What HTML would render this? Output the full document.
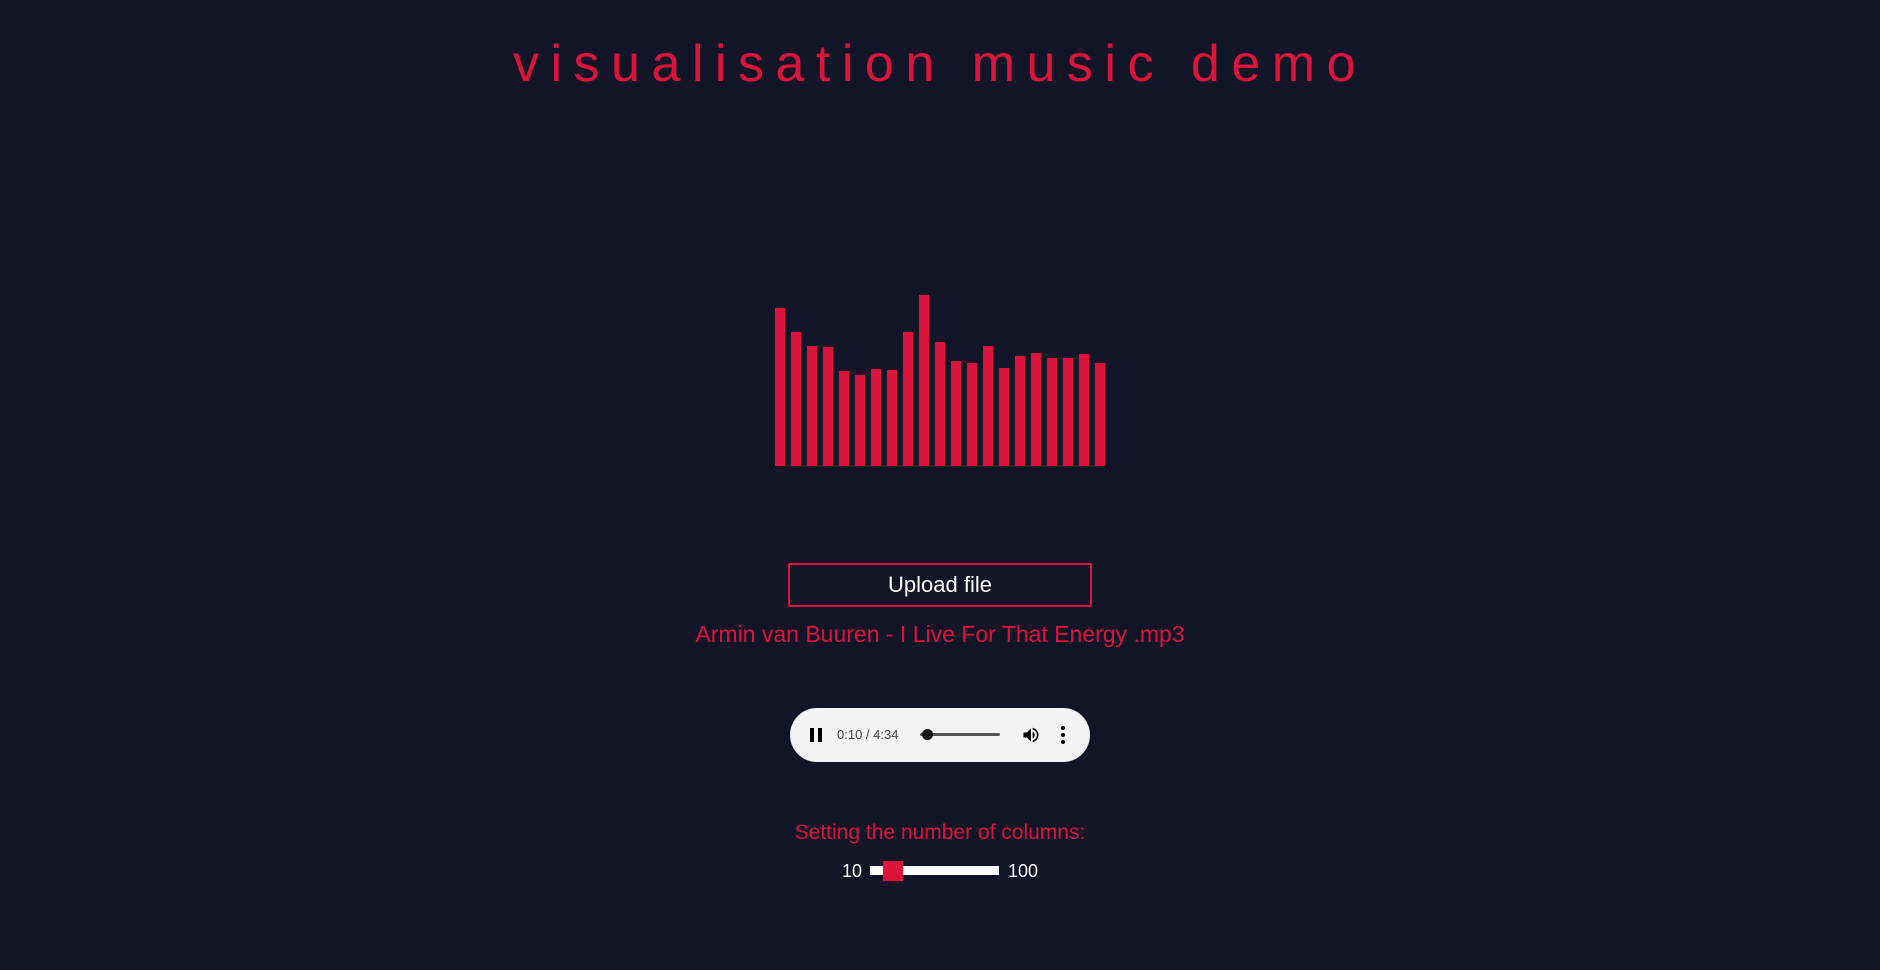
<!DOCTYPE html>
<html><head><meta charset="utf-8"><style>
html,body{margin:0;padding:0;width:1880px;height:970px;background:#121528;overflow:hidden;font-family:"Liberation Sans",sans-serif}
.a{position:absolute}
.bar{position:absolute;width:10px;background:#dc143c}
</style></head><body>
<div class="a" style="left:0;width:1880px;top:34px;text-align:center;color:#dc143c;font-size:52px;letter-spacing:11.5px;line-height:60px">visualisation music demo</div>
<div class="bar" style="left:775px;top:308px;height:158px"></div>
<div class="bar" style="left:791px;top:332px;height:134px"></div>
<div class="bar" style="left:807px;top:346px;height:120px"></div>
<div class="bar" style="left:823px;top:347px;height:119px"></div>
<div class="bar" style="left:839px;top:371px;height:95px"></div>
<div class="bar" style="left:855px;top:375px;height:91px"></div>
<div class="bar" style="left:871px;top:369px;height:97px"></div>
<div class="bar" style="left:887px;top:370px;height:96px"></div>
<div class="bar" style="left:903px;top:332px;height:134px"></div>
<div class="bar" style="left:919px;top:295px;height:171px"></div>
<div class="bar" style="left:935px;top:342px;height:124px"></div>
<div class="bar" style="left:951px;top:361px;height:105px"></div>
<div class="bar" style="left:967px;top:363px;height:103px"></div>
<div class="bar" style="left:983px;top:346px;height:120px"></div>
<div class="bar" style="left:999px;top:368px;height:98px"></div>
<div class="bar" style="left:1015px;top:356px;height:110px"></div>
<div class="bar" style="left:1031px;top:353px;height:113px"></div>
<div class="bar" style="left:1047px;top:358px;height:108px"></div>
<div class="bar" style="left:1063px;top:358px;height:108px"></div>
<div class="bar" style="left:1079px;top:354px;height:112px"></div>
<div class="bar" style="left:1095px;top:363px;height:103px"></div>
<div class="a" style="left:788px;top:563px;width:300px;height:40px;border:2px solid #dc143c;color:#fff;font-size:22px;line-height:40px;text-align:center">Upload file</div>
<div class="a" style="left:0;width:1880px;top:618px;text-align:center;color:#dc143c;font-size:23px;line-height:32px">Armin van Buuren - I Live For That Energy .mp3</div>
<div class="a" style="left:790px;top:708px;width:300px;height:54px;border-radius:27px;background:#f1f3f4">
 <div class="a" style="left:20px;top:20px;width:4px;height:14px;background:#000"></div>
 <div class="a" style="left:28px;top:20px;width:4px;height:14px;background:#000"></div>
 <div class="a" style="left:47px;top:18px;font-size:13px;color:#444;line-height:18px">0:10 / 4:34</div>
 <div class="a" style="left:130px;top:25px;width:80px;height:3px;background:#555;border-radius:2px"></div>
 <div class="a" style="left:132px;top:21px;width:11px;height:11px;background:#111;border-radius:50%"></div>
 <svg class="a" style="left:231px;top:17px" width="20" height="20" viewBox="0 0 24 24"><path d="M3 9v6h4l5 5V4L7 9H3zm13.5 3c0-1.77-1-3.290-2.5-4.03v8.05c1.5-.73 2.5-2.25 2.5-4.02zM14 3.23v2.06c2.89.86 5 3.54 5 6.71s-2.11 5.85-5 6.71v2.06c4-.91 7-4.490 7-8.77s-3-7.86-7-8.77z"/></svg>
 <div class="a" style="left:271px;top:18px;width:4px;height:4px;background:#000;border-radius:50%;box-shadow:0 7px 0 #000,0 14px 0 #000"></div>
</div>
<div class="a" style="left:0;width:1880px;top:818px;text-align:center;color:#dc143c;font-size:21px;line-height:30px">Setting the number of columns:</div>
<div class="a" style="left:842px;top:860px;color:#fff;font-size:18px;line-height:22px">10</div>
<div class="a" style="left:870px;top:866px;width:129px;height:9px;background:#fff"></div>
<div class="a" style="left:883px;top:861px;width:20px;height:20px;background:#dc143c"></div>
<div class="a" style="left:1008px;top:860px;color:#fff;font-size:18px;line-height:22px">100</div>
</body></html>
